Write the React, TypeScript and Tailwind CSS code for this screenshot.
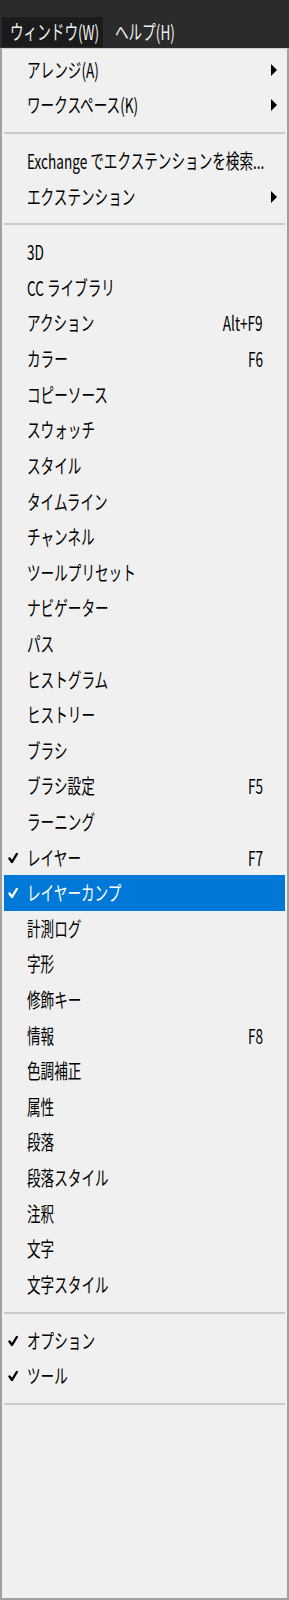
import React from 'react';

type Entry =
  | { sep: true }
  | {
      sep?: false;
      label: string;
      shortcut?: string;
      submenu?: boolean;
      checked?: boolean;
      active?: boolean;
    };

const entries: Entry[] = [
  { label: 'アレンジ(A)', submenu: true },
  { label: 'ワークスペース(K)', submenu: true },
  { sep: true },
  { label: 'Exchange でエクステンションを検索...' },
  { label: 'エクステンション', submenu: true },
  { sep: true },
  { label: '3D' },
  { label: 'CC ライブラリ' },
  { label: 'アクション', shortcut: 'Alt+F9' },
  { label: 'カラー', shortcut: 'F6' },
  { label: 'コピーソース' },
  { label: 'スウォッチ' },
  { label: 'スタイル' },
  { label: 'タイムライン' },
  { label: 'チャンネル' },
  { label: 'ツールプリセット' },
  { label: 'ナビゲーター' },
  { label: 'パス' },
  { label: 'ヒストグラム' },
  { label: 'ヒストリー' },
  { label: 'ブラシ' },
  { label: 'ブラシ設定', shortcut: 'F5' },
  { label: 'ラーニング' },
  { label: 'レイヤー', shortcut: 'F7', checked: true },
  { label: 'レイヤーカンプ', checked: true, active: true },
  { label: '計測ログ' },
  { label: '字形' },
  { label: '修飾キー' },
  { label: '情報', shortcut: 'F8' },
  { label: '色調補正' },
  { label: '属性' },
  { label: '段落' },
  { label: '段落スタイル' },
  { label: '注釈' },
  { label: '文字' },
  { label: '文字スタイル' },
  { sep: true },
  { label: 'オプション', checked: true },
  { label: 'ツール', checked: true },
  { sep: true },
];

function Check({ white }: { white?: boolean }) {
  return (
    <svg
      className="absolute left-[4px] top-1/2 h-[11px] w-[10px] -translate-y-1/2"
      viewBox="0 0 10 11"
      fill="none"
      stroke={white ? '#ffffff' : '#000000'}
      strokeWidth={2.4}
      strokeLinecap="round"
      strokeLinejoin="round"
    >
      <path d="M1.5 6 L4 9.5 L8.8 1.5" />
    </svg>
  );
}

function Arrow() {
  return (
    <svg className="absolute right-[8px] top-1/2 h-[12px] w-[6px] -translate-y-1/2" viewBox="0 0 6 12">
      <polygon points="0,0 6,6 0,12" fill="#000000" />
    </svg>
  );
}

export default function App() {
  return (
    <div className="flex h-[1600px] w-[289px] flex-col overflow-hidden bg-[#2b2b2b] font-['Noto_Sans_CJK_JP','Noto_Sans',sans-serif]">
      {/* Menu bar */}
      <div className="flex h-[48px] shrink-0 items-start gap-[2px] pl-[2px] pt-[17px]">
        <div className="flex h-[30px] w-[101px] items-center bg-[#1b1b1b] pl-[8px]">
          <span className="inline-block origin-left scale-x-[0.68] whitespace-nowrap text-[20px] text-[#f0f0f0]">
            ウィンドウ(W)
          </span>
        </div>
        <div className="flex h-[30px] w-[90px] items-center pl-[10px]">
          <span className="inline-block origin-left scale-x-[0.68] whitespace-nowrap text-[20px] text-[#f0f0f0]">
            ヘルプ(H)
          </span>
        </div>
      </div>

      {/* Dropdown */}
      <div className="flex-1 overflow-hidden border-2 border-t border-[#a0a0a0] border-t-[#d0d0d0] bg-[#f0f0f0] px-[2px] pt-[3px]">
        {entries.map((e, i) =>
          e.sep ? (
            <div key={i} className="flex h-[20px] items-center">
              <div className="h-[2px] w-full bg-[#cacaca]" />
            </div>
          ) : (
            <div
              key={i}
              className={`relative flex h-[35.62px] items-center pl-[23px] pr-[22px] ${
                e.active ? 'bg-[#0078d7] text-white' : 'text-black'
              }`}
            >
              {e.checked && <Check white={e.active} />}
              <span className="inline-block shrink-0 origin-left scale-x-[0.68] whitespace-nowrap text-[20px] leading-none">
                {e.label}
              </span>
              {e.shortcut && (
                <span className="ml-auto inline-block shrink-0 origin-right scale-x-[0.68] whitespace-nowrap text-[20px] leading-none">
                  {e.shortcut}
                </span>
              )}
              {e.submenu && <Arrow />}
            </div>
          )
        )}
      </div>
    </div>
  );
}
